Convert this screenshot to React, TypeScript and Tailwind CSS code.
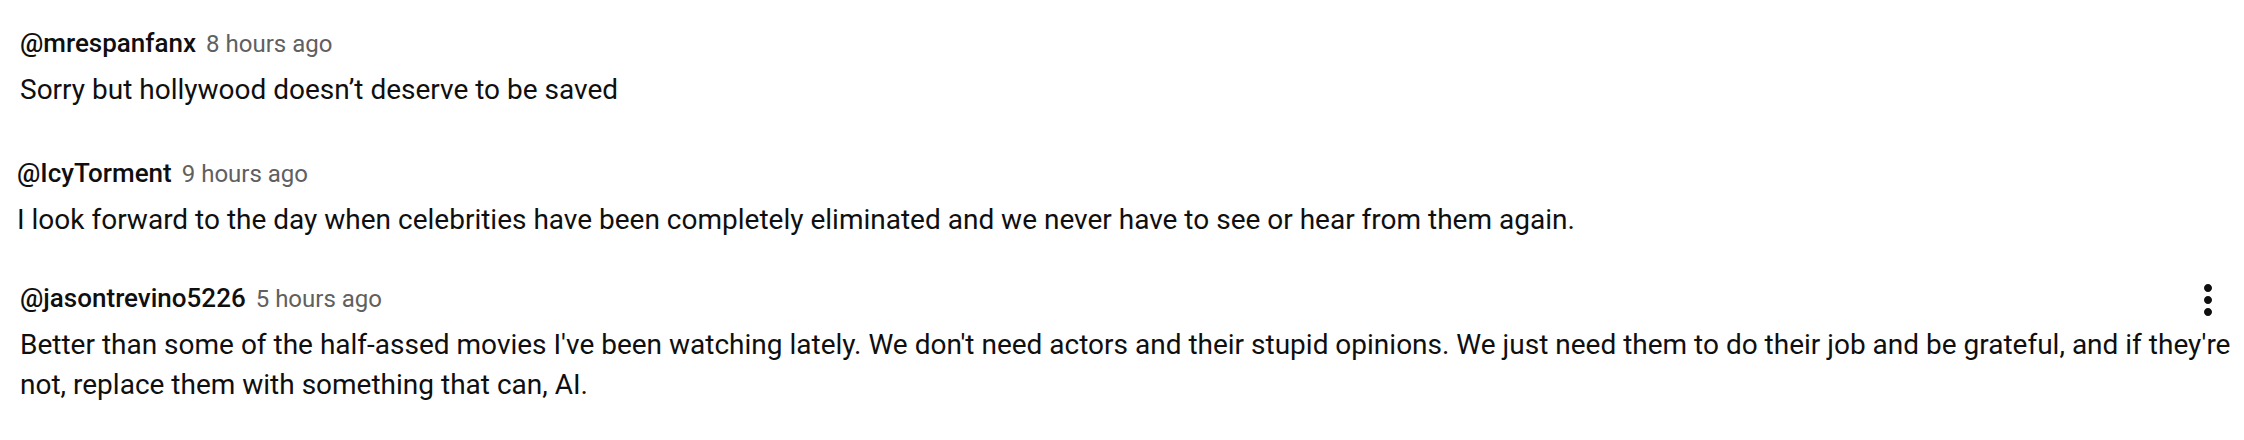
const MoreVert = () => (
    <svg viewBox="0 0 24 24" className="h-12 w-12 fill-[#0f0f0f]">
        <path d="M12 8c1.1 0 2-.9 2-2s-.9-2-2-2-2 .9-2 2 .9 2 2 2zm0 2c-1.1 0-2 .9-2 2s.9 2 2 2 2-.9 2-2-.9-2-2-2zm0 6c-1.1 0-2 .9-2 2s.9 2 2 2 2-.9 2-2-.9-2-2-2z" />
    </svg>
);

interface CommentProps {
    author: string;
    time: string;
    text: string;
    className?: string;
    menu?: boolean;
}

function Comment({ author, time, text, className, menu }: CommentProps) {
    return (
        <div className={className}>
            <div className="relative">
                <div className="flex items-baseline gap-[10px] leading-[36px] mb-[8px]">
                    <span className="text-[26px] font-medium text-[#0f0f0f]">{author}</span>
                    <span className="text-[24px] text-[#606060]">{time}</span>
                </div>
                <p className="text-[28px] leading-[40px] text-[#0f0f0f]">{text}</p>
                {/* action menu sits over the right end of the header row */}
                {menu && (
                    <div className="absolute right-[12px] top-[-4px]">
                        <MoreVert />
                    </div>
                )}
            </div>
        </div>
    );
}

export default function App() {
    return (
        <div className="w-[2244px] h-[440px] bg-white font-['Roboto',sans-serif] flex flex-col">
            <Comment
                className="pl-[20px] pt-[25px]"
                author="@mrespanfanx"
                time="8 hours ago"
                text="Sorry but hollywood doesn’t deserve to be saved"
            />
            <Comment
                className="pl-[17px] pt-[45px]"
                author="@IcyTorment"
                time="9 hours ago"
                text="I look forward to the day when celebrities have been completely eliminated and we never have to see or hear from them again."
            />
            <Comment
                className="pl-[20px] pt-[40px]"
                menu
                author="@jasontrevino5226"
                time="5 hours ago"
                text="Better than some of the half-assed movies I've been watching lately. We don't need actors and their stupid opinions. We just need them to do their job and be grateful, and if they're not, replace them with something that can, AI."
            />
        </div>
    );
}
